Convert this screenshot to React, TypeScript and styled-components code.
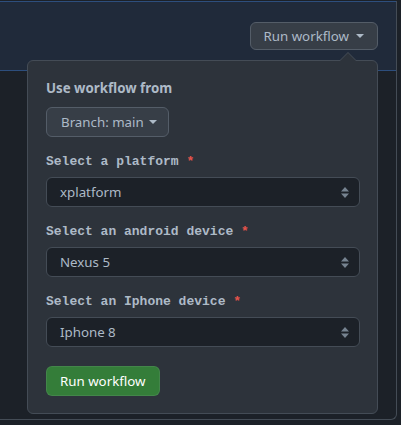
import React from 'react';
import styled, { createGlobalStyle } from 'styled-components';

const GlobalStyle = createGlobalStyle`
  body {
    margin: 0;
    background-color: #1c2128;
    font-family: "Noto Sans", "Liberation Sans", sans-serif;
    color: #adbac7;
  }
`;

const Frame = styled.div`
  box-sizing: border-box;
  height: 419px;
  margin: 1px 4px 0 -20px;
  border: 1px solid #444c56;
  border-top: none;
  border-radius: 0 0 6px 6px;
  background-color: #1c2128;
`;

const Banner = styled.div`
  box-sizing: border-box;
  height: 70px;
  display: flex;
  align-items: center;
  justify-content: flex-end;
  padding-right: 18px;
  background-color: rgba(65, 132, 228, 0.1);
  border-top: 1px solid rgba(65, 132, 228, 0.4);
  border-bottom: 1px solid rgba(65, 132, 228, 0.4);
`;

const Anchor = styled.div`
  position: relative;
`;

const Button = styled.button<{ $primary?: boolean }>`
  box-sizing: border-box;
  display: inline-flex;
  align-items: center;
  gap: 7px;
  height: ${p => (p.$primary ? '30px' : '28px')};
  padding: 0 13px;
  font-family: inherit;
  font-size: 13.3px;
  line-height: 20px;
  color: ${p => (p.$primary ? '#ffffff' : '#adbac7')};
  background-color: ${p => (p.$primary ? '#347d39' : '#373e47')};
  border: 1px solid ${p => (p.$primary ? 'rgba(205, 217, 229, 0.1)' : '#545d68')};
  border-radius: 6px;
  cursor: pointer;
`;

const Popover = styled.div`
  position: absolute;
  top: calc(100% + 10px);
  right: 0;
  box-sizing: border-box;
  width: 351px;
  padding: 17px 17px 17px 18px;
  background-color: #2d333b;
  border: 1px solid #444c56;
  border-radius: 6px;
  display: flex;
  flex-direction: column;
  align-items: flex-start;

  &::before,
  &::after {
    content: '';
    position: absolute;
    right: 21px;
    border: 8px solid transparent;
    border-top: none;
  }
  &::before {
    top: -9px;
    border-bottom: 8px solid #444c56;
  }
  &::after {
    top: -8px;
    border-bottom: 8px solid #2d333b;
  }
`;

const Title = styled.div`
  font-size: 13.3px;
  font-weight: 700;
  line-height: 20px;
  color: #adbac7;
`;

const BranchButton = styled(Button)`
  height: 30px;
  margin-top: 9px;
  gap: 5px;
  padding: 0 11px 0 14px;
`;

const Field = styled.div`
  display: flex;
  flex-direction: column;
  align-self: stretch;
  margin-top: 13px;
`;

const Label = styled.label`
  padding-top: 2px;
  font-family: "Liberation Mono", "DejaVu Sans Mono", monospace;
  font-size: 13px;
  font-weight: 700;
  line-height: 20px;
  color: #adbac7;
  white-space: pre;
`;

const Required = styled.span`
  color: #e5534b;
`;

const SelectBox = styled.div`
  box-sizing: border-box;
  height: 30px;
  margin-top: 5px;
  display: flex;
  align-items: center;
  justify-content: space-between;
  padding: 0 10px 0 13px;
  font-size: 13.3px;
  color: #adbac7;
  background-color: #1c2128;
  border: 1px solid #444c56;
  border-radius: 6px;
`;

const SubmitButton = styled(Button)`
  margin-top: 19px;
`;

const Caret = () => (
  <svg width="8" height="4" viewBox="0 0 8 4">
    <path d="M0 0h8L4 4z" fill="currentColor" />
  </svg>
);

const UpDown = () => (
  <svg width="8" height="11" viewBox="0 0 8 11">
    <path d="M4 0L8 4.5H0z M0 6.5h8L4 11z" fill="#768390" />
  </svg>
);

const fields = [
  { label: 'Select a platform', value: 'xplatform' },
  { label: 'Select an android device', value: 'Nexus 5' },
  { label: 'Select an Iphone device', value: 'Iphone 8' },
];

const App: React.FC = () => {
  return (
    <>
      <GlobalStyle />
      <Frame>
        <Banner>
          <Anchor>
            <Button>
              <span>Run workflow</span>
              <Caret />
            </Button>
            <Popover>
              <Title>Use workflow from</Title>
              <BranchButton>
                <span>Branch: main</span>
                <Caret />
              </BranchButton>
              {fields.map(f => (
                <Field key={f.label}>
                  <Label>
                    {f.label} <Required>*</Required>
                  </Label>
                  <SelectBox>
                    <span>{f.value}</span>
                    <UpDown />
                  </SelectBox>
                </Field>
              ))}
              <SubmitButton $primary>Run workflow</SubmitButton>
            </Popover>
          </Anchor>
        </Banner>
      </Frame>
    </>
  );
};

export default App;
